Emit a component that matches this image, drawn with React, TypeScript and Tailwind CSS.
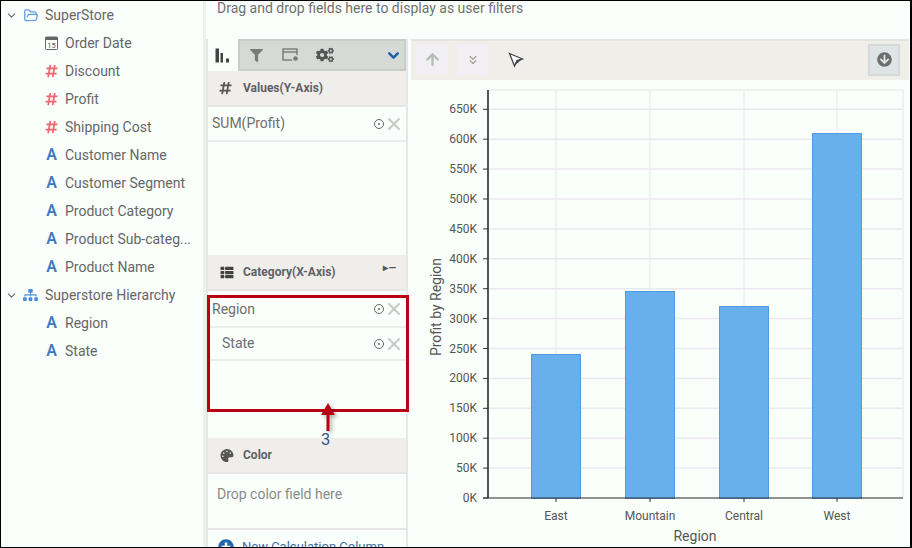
import { ChevronDown, ChevronsDown, FolderOpen, X } from "lucide-react"
import { FaArrowCircleDown, FaArrowUp, FaCogs, FaFilter, FaHashtag, FaPalette, FaPlusCircle, FaSitemap, FaThList } from "react-icons/fa"

type Kind = "date" | "num" | "text"

const fields: { label: string; kind: Kind }[] = [
  { label: "Order Date", kind: "date" },
  { label: "Discount", kind: "num" },
  { label: "Profit", kind: "num" },
  { label: "Shipping Cost", kind: "num" },
  { label: "Customer Name", kind: "text" },
  { label: "Customer Segment", kind: "text" },
  { label: "Product Category", kind: "text" },
  { label: "Product Sub-categ...", kind: "text" },
  { label: "Product Name", kind: "text" },
]

function FieldIcon({ kind }: { kind: Kind }) {
  if (kind === "num") return <FaHashtag className="w-[13px] h-[14px] text-[#f0656f]" />
  if (kind === "text") return <span className="w-[13px] text-center text-[16px] leading-none font-semibold text-[#3f78c4]">A</span>
  return (
    <svg width="13" height="14" viewBox="0 0 13 14">
      <rect x="0.5" y="1" width="12" height="12.5" rx="1" fill="none" stroke="#666" />
      <rect x="0.5" y="1" width="12" height="3" fill="#666" />
      <text x="6.5" y="11.5" textAnchor="middle" fontSize="7.5" fill="#555" fontFamily="Roboto">15</text>
    </svg>
  )
}

function FieldRow({ label, kind }: { label: string; kind: Kind }) {
  return (
    <div className="flex h-7 items-center gap-[7px] pl-[44px]">
      <FieldIcon kind={kind} />
      <span>{label}</span>
    </div>
  )
}

function GroupRow({ label, icon }: { label: string; icon: React.ReactNode }) {
  return (
    <div className="flex h-7 items-center pl-[4px]">
      <ChevronDown className="w-[13px] h-[13px] text-[#666]" />
      <span className="ml-[5px] w-[22px]">{icon}</span>
      <span>{label}</span>
    </div>
  )
}

function Sidebar() {
  return (
    <div className="w-[205px] shrink-0 border-r-[3px] border-[#eef0ec] text-[14px] text-[#666]">
      <GroupRow label="SuperStore" icon={<FolderOpen className="w-[16px] h-[15px] text-[#5b9be0]" />} />
      {fields.map((f) => (
        <FieldRow key={f.label} label={f.label} kind={f.kind} />
      ))}
      <GroupRow label="Superstore Hierarchy" icon={<FaSitemap className="w-[15px] h-[14px] text-[#4a8fdc]" />} />
      <FieldRow label="Region" kind="text" />
      <FieldRow label="State" kind="text" />
    </div>
  )
}

function SectionHeader({ icon, label, extra }: { icon: React.ReactNode; label: string; extra?: React.ReactNode }) {
  return (
    <div className="flex h-[36px] items-center border-b-2 border-[#e4e5e4] bg-[#f0eeea] pl-[11px] pr-[10px]">
      <span className="flex w-[24px]">{icon}</span>
      <span className="text-[12px] font-bold text-[#5f6066]">{label}</span>
      {extra}
    </div>
  )
}

function Pill({ label, inset, lift, tall }: { label: string; inset?: boolean; lift?: boolean; tall?: boolean }) {
  return (
    <div className={`flex items-center border-b-2 border-[#ebecec] pr-[2px] text-[14px] text-[#6e6e6e] ${tall ? "h-[35px]" : "h-[33px]"} ${inset ? "pl-[14px]" : "pl-[4px]"} ${lift ? "pb-[3px]" : ""}`}>
      <span className="flex-1">{label}</span>
      <span className="flex h-[10px] w-[10px] items-center justify-center rounded-full border-[1.5px] border-[#666]">
        <span className="h-[2px] w-[2px] rounded-full bg-[#666]" />
      </span>
      <X className="h-[20px] w-[20px] text-[#c9cbc9]" strokeWidth={2.5} />
    </div>
  )
}

function BindingPanel() {
  return (
    <div className="relative h-[520px] w-[202px] shrink-0 border-x-2 border-[#e6e7e8]">
      <div className="flex h-[32px]">
        <div className="flex w-[30px] items-center pl-[7px]">
          <svg width="15" height="15" viewBox="0 0 15 15" fill="#444">
            <rect x="0.5" y="0.5" width="3.5" height="14" />
            <rect x="5.5" y="5" width="2.5" height="9.5" />
            <rect x="11" y="10.5" width="3" height="4" />
          </svg>
        </div>
        <div className="flex flex-1 items-center border-2 border-[#c9cdc9] bg-[#d6dad6] pl-[10px] pr-[2px]">
          <FaFilter className="h-[13px] w-[13px] text-[#777b79]" />
          <svg className="ml-[19px]" width="18" height="16" viewBox="0 0 18 16" fill="none" stroke="#777" strokeWidth="1.4">
            <rect x="1" y="2" width="14" height="11" />
            <path d="M1 5h14" />
            <circle cx="13.5" cy="11.5" r="3" fill="#777" stroke="#d6dad6" />
          </svg>
          <FaCogs className="ml-[16px] h-[16px] w-[18px] text-[#555]" />
          <ChevronDown className="ml-auto h-[17px] w-[17px] text-[#1f5fa8]" strokeWidth={3.5} />
        </div>
      </div>
      <SectionHeader icon={<FaHashtag className="h-[14px] w-[13px] text-[#555]" />} label="Values(Y-Axis)" />
      <div className="h-[148px]">
        <Pill label="SUM(Profit)" tall />
      </div>
      <SectionHeader
        icon={<FaThList className="h-[13px] w-[16px] text-[#444]" />}
        label="Category(X-Axis)"
        extra={<span className="ml-auto mb-2 text-[10px] font-bold leading-none text-[#555]">▸—</span>}
      />
      <div className="mt-[4px] h-[143px]">
        <Pill label="Region" lift />
        <Pill label="State" inset />
      </div>
      <SectionHeader icon={<FaPalette className="h-[13px] w-[16px] text-[#555]" />} label="Color" />
      <div className="h-[56px] border-b-2 border-[#e4e5e4] pl-[9px] pt-[10px] text-[14px] text-[#8a8a8a]">Drop color field here</div>
      <div className="flex items-center pl-[10px] pt-[7px] text-[13px] text-[#3c6fa8]">
        <FaPlusCircle className="h-[16px] w-[16px] text-[#2068ab]" />
        <span className="ml-[8px]">New Calculation Column</span>
      </div>

      {/* annotation over the category drop zone */}
      <div className="absolute left-[-1px] top-[256px] h-[117px] w-[202px] border-[3px] border-[#b80012]" />
      <svg className="absolute left-[110px] top-[364px] drop-shadow-[2px_2px_2px_rgba(0,0,0,0.35)]" width="21" height="30" viewBox="0 0 21 30">
        <path d="M3 12 L10 0 L17 12 L11.5 12 L11.5 28 L8.5 28 L8.5 12 Z" fill="#b80012" />
      </svg>
      <span className="absolute left-[113px] top-[393px] text-[16px] leading-none font-['Liberation_Sans'] text-[#3a5488]">3</span>
    </div>
  )
}

const ticks = [0, 50, 100, 150, 200, 250, 300, 350, 400, 450, 500, 550, 600, 650]
const bars = [
  { label: "East", x: 121, top: 314 },
  { label: "Mountain", x: 215, top: 251 },
  { label: "Central", x: 309, top: 266 },
  { label: "West", x: 402, top: 93 },
]

function Chart() {
  // svg origin is at page x=410, y=40
  const base = 458
  const axis = 78
  return (
    <svg width="502" height="508" viewBox="0 0 502 508" fontFamily="Roboto" fill="#555" className="absolute left-[2px] top-[1px]">
      <rect x={axis} y="50" width="415" height={base - 50} fill="none" stroke="#e6e6ea" />
      {ticks.map((t) => {
        const y = base - (t / 50) * 29.9
        return (
          <g key={t}>
            {t > 0 && <line x1={axis} x2="493" y1={y} y2={y} stroke="#ebe8f0" strokeWidth="1.5" />}
            <line x1={axis - 5} x2={axis} y1={y} y2={y} stroke="#333" />
            <text x={axis - 11} y={y + 4} textAnchor="end" fontSize="12">{t}K</text>
          </g>
        )
      })}
      {bars.map((b) => (
        <g key={b.label}>
          <line x1={b.x + 25} x2={b.x + 25} y1="50" y2={base} stroke="#e8e8ec" />
          <rect x={b.x + 0.5} y={b.top + 0.5} width="49" height={base - b.top} fill="#68b0ec" stroke="#4f9ae0" />
          <line x1={b.x + 25} x2={b.x + 25} y1={base} y2={base + 4} stroke="#333" />
          <text x={b.x + 25} y={base + 22} textAnchor="middle" fontSize="12">{b.label}</text>
        </g>
      ))}
      <line x1={axis} x2={axis} y1="50" y2={base} stroke="#222" strokeWidth="1.5" />
      <line x1={axis - 5} x2="493" y1={base} y2={base} stroke="#333" />
      <text x="285" y={base + 43} textAnchor="middle" fontSize="14">Region</text>
      <text transform={`translate(31 ${base - 191}) rotate(-90)`} textAnchor="middle" fontSize="14">Profit by Region</text>
    </svg>
  )
}

function ChartPanel() {
  return (
    <div className="relative flex-1">
      <div className="ml-[3px] mr-[1px] flex h-[41px] items-center border-t-2 border-[#e4e4e0] bg-[#efeee9] pb-[2px] pl-[5px] pr-[9px]">
        <div className="flex h-[31px] w-[32px] items-center justify-center bg-[#f1eff4]">
          <FaArrowUp className="h-[15px] w-[15px] text-[#afc0b3]" />
        </div>
        <div className="ml-[9px] flex h-[31px] w-[31px] items-center justify-center bg-[#f1eff4]">
          <ChevronsDown className="h-[14px] w-[14px] text-[#a89a90]" />
        </div>
        <svg className="ml-[20px]" width="16" height="16" viewBox="0 0 16 16">
          <path d="M1.5 1.5 L14.5 7 L9 8.5 L6.5 14 Z" fill="#fff" stroke="#3f4450" strokeWidth="1.3" />
          <path d="M9 8.5 L14 7.2 L6.7 13.5 Z" fill="#3f4450" />
        </svg>
        <div className="ml-auto flex h-[32px] w-[32px] items-center justify-center border-2 border-[#d5d8d6] bg-[#dfe5e6]">
          <FaArrowCircleDown className="h-[15px] w-[15px] text-[#6e6e6e]" />
        </div>
      </div>
      <Chart />
    </div>
  )
}

export default function App() {
  return (
    <div className="flex h-[548px] w-[912px] overflow-hidden border-x-2 border-y border-black border-l bg-[#fbfffb] font-['Roboto',sans-serif]">
      <Sidebar />
      <div className="flex min-w-0 flex-1 flex-col">
        <div className="h-[38px] shrink-0 pl-[11px] text-[14px] leading-[14px] text-[#707070]">Drag and drop fields here to display as user filters</div>
        <div className="flex flex-1">
          <BindingPanel />
          <ChartPanel />
        </div>
      </div>
    </div>
  )
}
